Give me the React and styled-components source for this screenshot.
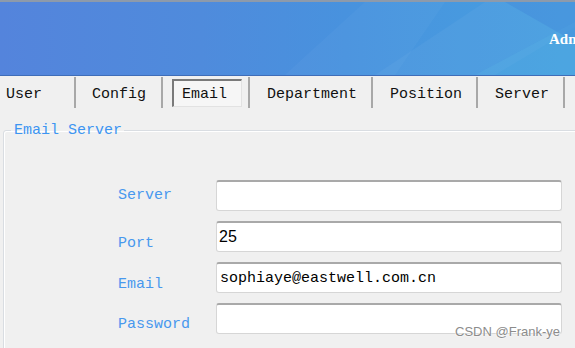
import styled, { createGlobalStyle } from 'styled-components';

const Global = createGlobalStyle`
  html, body { margin: 0; padding: 0; }
  body {
    background: #f0f0f0;
    width: 575px;
    height: 348px;
    overflow: hidden;
    font-family: "Liberation Mono", "DejaVu Sans Mono", monospace;
  }
`;

const Page = styled.div`
  position: relative;
  width: 575px;
  height: 348px;
  overflow: hidden;
  background: #f0f0f0;
`;

const Header = styled.header`
  position: relative;
  height: 73px;
  border-top: 2px solid #8d9aab;
  border-bottom: 1px solid #3f6db8;
  background: linear-gradient(90deg, #5484dc 0%, #4f8bdc 35%, #4892de 60%, #47a0e0 100%);
  display: flex;
  align-items: center;
  overflow: hidden;
`;

const Decor = styled.svg`
  position: absolute;
  right: 0;
  top: 0;
`;

const Brand = styled.div`
  position: relative;
  margin-left: 549px;
  margin-top: 2px;
  color: #fff;
  font-family: "Liberation Serif", serif;
  font-weight: bold;
  font-size: 15px;
  white-space: nowrap;
`;

const TabBar = styled.nav`
  display: flex;
  height: 33px;
  padding-top: 1px;
`;

const Tab = styled.div`
  width: ${p => p.$w}px;
  flex: none;
  box-sizing: border-box;
  padding-left: ${p => p.$pad}px;
  padding-top: 3px;
  height: 31px;
  display: flex;
  align-items: center;
  border-right: 2px solid #a8a8a8;
  font-size: 15px;
  color: #111;
`;

const ActiveLabel = styled.span`
  display: flex;
  align-items: center;
  margin-left: -9px;
  margin-top: -2px;
  height: 28px;
  width: 70px;
  box-sizing: border-box;
  padding-left: 8px;
  padding-top: 2px;
  border-top: 2px solid #7a7a7a;
  border-left: 2px solid #7a7a7a;
  border-right: 1px solid #e2e2e2;
  border-bottom: 1px solid #e2e2e2;
  background: #f6f6f6;
`;

const Group = styled.fieldset`
  margin: 12px 0 0 3px;
  padding: 46px 0 30px 0;
  width: 620px;
  border: 1px solid #d9dde2;
  border-radius: 3px;
  box-shadow: inset 1px 1px 0 #fff;
`;

const Legend = styled.legend`
  margin-left: 7px;
  padding: 0 2px 0 3px;
  color: #3d95f2;
  font-size: 15px;
`;

const Form = styled.div`
  display: grid;
  grid-template-columns: 98px 346px;
  row-gap: 10px;
  margin-left: 114px;
  margin-top: -5px;
`;

const Label = styled.label`
  color: #4898ee;
  font-size: 15px;
  align-self: center;
  padding-top: ${p => p.$drop || 0}px;
`;

const Input = styled.div`
  height: 31px;
  box-sizing: border-box;
  background: #fff;
  border: 1px solid #d6d6d6;
  border-top: 2px solid #a9a9a9;
  border-radius: 3px;
  display: flex;
  align-items: center;
  padding-left: ${p => (p.$mono ? 3 : 2)}px;
  font-family: ${p => (p.$mono ? '"Liberation Mono", monospace' : '"Liberation Sans", Arial, sans-serif')};
  font-size: ${p => (p.$mono ? 15 : 16)}px;
  color: #000;
  white-space: nowrap;
`;

const Watermark = styled.div`
  position: absolute;
  right: 15px;
  bottom: 9px;
  font-family: "Liberation Sans", Arial, sans-serif;
  font-size: 13px;
  color: #8c8c8c;
  text-shadow: 0 0 2px #fff, 0 0 2px #fff;
`;

const tabs = [
  { name: 'User', w: 76, pad: 6 },
  { name: 'Config', w: 87, pad: 16 },
  { name: 'Email', w: 87, pad: 18, active: true },
  { name: 'Department', w: 123, pad: 17 },
  { name: 'Position', w: 105, pad: 17 },
  { name: 'Server', w: 87, pad: 17 },
  { name: '', w: 40, pad: 0 },
];

const fields = [
  { label: 'Server', value: '', drop: 0 },
  { label: 'Port', value: '25', drop: 14 },
  { label: 'Email', value: 'sophiaye@eastwell.com.cn', mono: true, drop: 14 },
  { label: 'Password', value: '', drop: 12 },
];

export default function App() {
  return (
    <Page>
      <Global />
      <Header>
        <Decor width="330" height="73" viewBox="0 0 330 73">
          <polygon points="40,73 120,0 200,0 150,73" fill="#ffffff" opacity="0.03" />
          <polygon points="130,73 240,0 330,0 330,25 250,73" fill="#ffffff" opacity="0.04" />
          <polygon points="230,73 330,20 330,73" fill="#5ab4e6" opacity="0.3" />
          <polygon points="260,0 330,0 330,40" fill="#3b7fd8" opacity="0.3" />
        </Decor>
        <Brand>Admin</Brand>
      </Header>
      <TabBar>
        {tabs.map((t, i) => (
          <Tab key={i} $w={t.w} $pad={t.pad}>
            {t.active ? <ActiveLabel>{t.name}</ActiveLabel> : t.name}
          </Tab>
        ))}
      </TabBar>
      <Group>
        <Legend>Email Server</Legend>
        <Form>
          {fields.map(f => [
            <Label key={f.label + 'l'} $drop={f.drop}>{f.label}</Label>,
            <Input key={f.label + 'i'} $mono={f.mono}>{f.value}</Input>,
          ])}
        </Form>
      </Group>
      <Watermark>CSDN @Frank-ye</Watermark>
    </Page>
  );
}
